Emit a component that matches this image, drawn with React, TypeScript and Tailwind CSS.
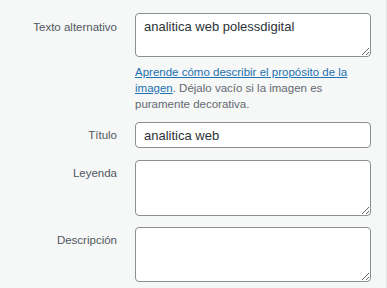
import { useState } from "react";

const labelCls =
  "w-[117px] shrink-0 text-right text-[11.5px] leading-4 text-[#50575e]";
const fieldCls =
  "w-[236px] rounded-[4px] border border-[#8c8f94] bg-white px-2 text-[13px] leading-[18px] text-[#2c3338] outline-none";

export default function App() {
  const [alt, setAlt] = useState("analitica web polessdigital");
  const [title, setTitle] = useState("analitica web");
  const [caption, setCaption] = useState("");
  const [description, setDescription] = useState("");

  return (
    <div
      className="h-[288px] w-[387px] overflow-hidden border-r border-[#e4e5e6] bg-[#f6f7f7]"
      style={{ fontFamily: '"Liberation Sans", Arial, sans-serif' }}
    >
      {/* Texto alternativo */}
      <div className="flex gap-[18px] pt-[13px]">
        <label className={`${labelCls} pt-[6px]`}>Texto alternativo</label>
        <div>
          <textarea
            value={alt}
            onChange={(e) => setAlt(e.target.value)}
            className={`${fieldCls} block h-[44px] pt-[4px]`}
          />
          <p className="mt-[7px] w-[236px] text-[11.5px] leading-4 text-[#646970]">
            <a href="#" className="text-[#2271b1] underline">
              Aprende cómo describir el propósito de la imagen
            </a>
            . Déjalo vacío si la imagen es puramente decorativa.
          </p>
        </div>
      </div>

      {/* Título */}
      <div className="mt-[10px] flex items-center gap-[18px]">
        <label className={labelCls}>Título</label>
        <input
          value={title}
          onChange={(e) => setTitle(e.target.value)}
          className={`${fieldCls} block h-[26px]`}
        />
      </div>

      {/* Leyenda */}
      <div className="mt-[12px] flex gap-[18px]">
        <label className={`${labelCls} pt-[5px]`}>Leyenda</label>
        <textarea
          value={caption}
          onChange={(e) => setCaption(e.target.value)}
          className={`${fieldCls} block h-[56px] pt-[4px]`}
        />
      </div>

      {/* Descripción */}
      <div className="mt-[11px] flex gap-[18px]">
        <label className={`${labelCls} pt-[5px]`}>Descripción</label>
        <textarea
          value={description}
          onChange={(e) => setDescription(e.target.value)}
          className={`${fieldCls} block h-[55px] pt-[4px]`}
        />
      </div>
    </div>
  );
}
